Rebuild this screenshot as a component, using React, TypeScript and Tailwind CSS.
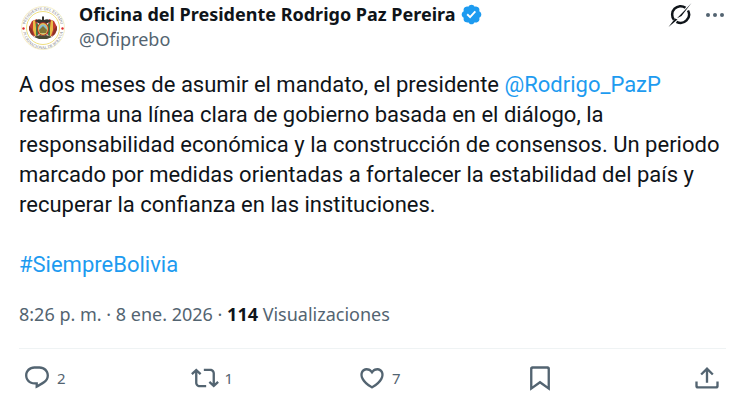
import type { ReactNode } from "react";

const paths = {
  reply:
    "M1.75 9.8c0-4.4 3.6-7.8 8-7.8h4.4c4.5 0 8.1 3.4 8.1 7.8 0 2.7-1.3 4.9-3.4 6.4-2.4 1.7-4.9 3.1-8.1 4.8v-3.5h-1c-4.4 0-8-3.3-8-7.7zm8-5.8c-3.3 0-6 2.5-6 5.8 0 3.3 2.7 5.8 6 5.8h3v1.9c1.7-.9 3.4-1.9 4.9-3 1.6-1.1 2.6-2.7 2.6-4.7 0-3.3-2.7-5.8-6.1-5.8z",
  repost:
    "M4.5 3.88l4.432 4.14-1.364 1.46L5.5 7.55V16c0 1.1.896 2 2 2H13v2H7.5c-2.209 0-4-1.79-4-4V7.55L1.432 9.48.068 8.02 4.5 3.88zM16.5 6H11V4h5.5c2.209 0 4 1.79 4 4v8.45l2.068-1.93 1.364 1.46-4.432 4.14-4.432-4.14 1.364-1.46 2.068 1.93V8c0-1.1-.896-2-2-2z",
  like: "M16.697 5.5c-1.222-.06-2.679.51-3.89 2.16l-.805 1.09-.806-1.09C9.984 6.01 8.526 5.44 7.304 5.5c-1.243.07-2.349.78-2.91 1.91-.552 1.12-.633 2.78.479 4.82 1.074 1.97 3.257 4.27 7.129 6.61 3.87-2.34 6.052-4.64 7.126-6.61 1.111-2.04 1.03-3.7.477-4.82-.561-1.13-1.666-1.84-2.908-1.91zm4.187 7.69c-1.351 2.48-4.001 5.12-8.379 7.67l-.503.3-.504-.3c-4.379-2.55-7.029-5.19-8.382-7.67-1.36-2.5-1.41-4.86-.514-6.67.887-1.79 2.647-2.91 4.601-3.01 1.651-.09 3.368.56 4.798 2.01 1.429-1.45 3.146-2.1 4.796-2.01 1.954.1 3.714 1.22 4.601 3.01.896 1.81.846 4.17-.514 6.67z",
  bookmark:
    "M3.5 3.9C3.5 2.8 4.3 2 5.4 2h13.2c1.1 0 1.9.8 1.9 1.9V22.9l-8.5-6-8.5 6V3.9zM6 4c-.3 0-.5.2-.5.5v14.56l6.5-4.6 6.5 4.6V4.5c0-.3-.2-.5-.5-.5H6z",
  share:
    "M12 2.59l5.7 5.7-1.41 1.42L13 6.41V16h-2V6.41l-3.3 3.3-1.41-1.42L12 2.59zM22 15v4c0 1.1-.9 2-2 2H4c-1.1 0-2-.9-2-2v-4h2v3.5c0 .28.22.5.5.5h15c.28 0 .5-.22.5-.5V15h2z",
};

function Seal() {
  return (
    <svg viewBox="0 0 48 48" className="mt-0.5 size-12 shrink-0" aria-hidden="true">
      <defs>
        <path id="seal-top" d="M6 24a18 18 0 0 1 36 0" />
        <path id="seal-bottom" d="M4 25a20 20 0 0 0 40 0" />
      </defs>
      <circle cx="24" cy="24" r="21.5" fill="#fff" stroke="#f6f0cc" strokeWidth="1" />
      <circle cx="24" cy="24" r="16.5" fill="#fff" stroke="#efdf80" strokeWidth="1" />
      <g fill="#77767a" fontSize="4" fontFamily="Liberation Serif, serif" textAnchor="middle">
        <text>
          <textPath href="#seal-top" startOffset="50%">PRESIDENTE DEL ESTADO</textPath>
        </text>
        <text>
          <textPath href="#seal-bottom" startOffset="50%">PLURINACIONAL DE BOLIVIA</textPath>
        </text>
      </g>
      <circle cx="4.5" cy="24.5" r="1.2" fill="#e02b2b" />
      <circle cx="43.5" cy="24.5" r="1.2" fill="#e02b2b" />
      {/* flags */}
      <path d="M18 15l-5 2-3 6 2 7 5 3 3-3z" fill="#c03a30" />
      <path d="M30 15l5 2 3 6-2 7-5 3-3-3z" fill="#c03a30" />
      <path d="M14 17l2-1 2 16-2 0-2-6z" fill="#e8bc45" />
      <path d="M34 17l-2-1-2 16 2 0 2-6z" fill="#e8bc45" />
      <path d="M10 22l3 3 2 8-3-3-2-4zM38 22l-3 3-2 8 3-3 2-4z" fill="#8c3227" />
      <path d="M17 19l2 1 0 11-2 1zM31 19l-2 1 0 11 2 1z" fill="#3f7b45" />
      {/* condor */}
      <path d="M16 17q3-3 7-1l0-3 1-1 1 1 0 3q4-2 7 1l-5 3h-6z" fill="#36342f" />
      <ellipse cx="24" cy="25" rx="6" ry="7" fill="#a5322c" />
      <ellipse cx="24" cy="25" rx="5" ry="6" fill="#e6c052" />
      <ellipse cx="24" cy="25" rx="4" ry="4.5" fill="#8bbcd0" />
      <path d="M20 26l4-4 4 4-1 3h-6z" fill="#7f7434" />
      <path d="M15 33l6-2 3 1 3-1 6 2-5 2h-8z" fill="#4a4a34" />
    </svg>
  );
}

function Action({ label, icon, count }: { label: string; icon: ReactNode; count?: number }) {
  return (
    <button type="button" aria-label={label} className="flex items-center gap-1.5 text-[15px]">
      {icon}
      {count !== undefined && <span>{count}</span>}
    </button>
  );
}

function Icon({ d }: { d: string }) {
  return (
    <svg viewBox="0 0 24 24" className="size-7" fill="currentColor" aria-hidden="true">
      <path d={d} />
    </svg>
  );
}

export default function App() {
  return (
    <article className="bg-white pt-0.5 pr-3.5 pl-[19px] font-['Noto_Sans',sans-serif] text-[#536471]">
      <header className="flex items-start gap-3">
        <Seal />
        <div className="min-w-0 flex-1 text-lg leading-[25px]">
          <div className="flex items-center gap-1">
            <a href="#perfil" className="font-bold text-[#0f1419]">
              Oficina del Presidente Rodrigo Paz Pereira
            </a>
            <svg viewBox="0 0 22 22" className="size-[23px] shrink-0" fill="#1d9bf0" role="img" aria-label="Cuenta verificada">
              <path d="M20.396 11c-.018-.646-.215-1.275-.57-1.816-.354-.54-.852-.972-1.438-1.246.223-.607.27-1.264.14-1.897-.131-.634-.437-1.218-.882-1.687-.47-.445-1.053-.75-1.687-.882-.633-.13-1.29-.083-1.897.14-.273-.587-.704-1.086-1.245-1.44S11.647 1.62 11 1.604c-.646.017-1.273.213-1.813.568s-.969.854-1.24 1.44c-.608-.223-1.267-.272-1.902-.14-.635.13-1.22.436-1.69.882-.445.47-.749 1.055-.878 1.688-.13.633-.08 1.29.144 1.896-.587.274-1.087.705-1.443 1.245-.356.54-.555 1.17-.574 1.817.02.647.218 1.276.574 1.817.356.54.856.972 1.443 1.245-.224.606-.274 1.263-.144 1.896.13.634.433 1.218.877 1.688.47.443 1.054.747 1.687.878.633.132 1.29.084 1.897-.136.274.586.705 1.084 1.246 1.439.54.354 1.17.551 1.816.569.647-.016 1.276-.213 1.817-.567s.972-.854 1.245-1.44c.604.239 1.266.296 1.903.164.636-.132 1.22-.447 1.68-.907.46-.46.776-1.044.908-1.681s.075-1.299-.165-1.903c.586-.274 1.084-.705 1.439-1.246.354-.54.551-1.17.569-1.816zM9.662 14.85l-3.429-3.428 1.293-1.302 2.072 2.072 4.4-4.794 1.347 1.246z" />
            </svg>
          </div>
          <a href="#perfil">@Ofiprebo</a>
        </div>
        <div className="mt-px flex items-center gap-2.5">
          <button type="button" aria-label="Grok" className="text-[#0f1419]">
            <svg viewBox="0 0 24 24" className="size-6" fill="none" stroke="currentColor" strokeWidth="2.5">
              <path d="M17.5 4.8A8.4 8.4 0 0 0 5.9 16.7M20 7.5A8.4 8.4 0 0 1 8.5 18.8" />
              <path d="M23.5 0L13.5 13 9 15.3 16.5 7.5zM.5 24L7 15.5 9.5 16.5z" fill="currentColor" stroke="none" />
            </svg>
          </button>
          <button type="button" aria-label="Más opciones">
            <svg viewBox="0 0 24 24" className="size-6" fill="currentColor">
              <circle cx="6" cy="12" r="2" />
              <circle cx="13" cy="12" r="2" />
              <circle cx="20" cy="12" r="2" />
            </svg>
          </button>
        </div>
      </header>

      <div className="mt-[18px] font-['Roboto',sans-serif] text-[22px] leading-[30px] text-[#0f1419]">
        <p>
          A dos meses de asumir el mandato, el presidente{" "}
          <a href="#rodrigo" className="text-[#1d9bf0]">@Rodrigo_PazP</a>{" "}
          reafirma una línea clara de gobierno basada en el diálogo, la
          responsabilidad económica y la construcción de consensos. Un periodo
          marcado por medidas orientadas a fortalecer la estabilidad del país y
          recuperar la confianza en las instituciones.
        </p>
        <p className="mt-[30px]">
          <a href="#siemprebolivia" className="text-[#1d9bf0]">#SiempreBolivia</a>
        </p>
      </div>

      <div className="mt-[22px] text-lg leading-6">
        <a href="#fecha">8:26 p. m. · 8 ene. 2026</a> ·{" "}
        <span className="font-bold text-[#0f1419]">114</span> Visualizaciones
      </div>

      <footer className="mt-[22px] grid grid-cols-[1fr_1fr_1fr_1fr_auto] border-t border-[#eff3f4] pt-[15px] pr-[5px] pl-1">
        <Action label="Responder" icon={<Icon d={paths.reply} />} count={2} />
        <Action label="Repostear" icon={<Icon d={paths.repost} />} count={1} />
        <Action label="Me gusta" icon={<Icon d={paths.like} />} count={7} />
        <Action label="Guardar" icon={<Icon d={paths.bookmark} />} />
        <Action label="Compartir" icon={<Icon d={paths.share} />} />
      </footer>
    </article>
  );
}
